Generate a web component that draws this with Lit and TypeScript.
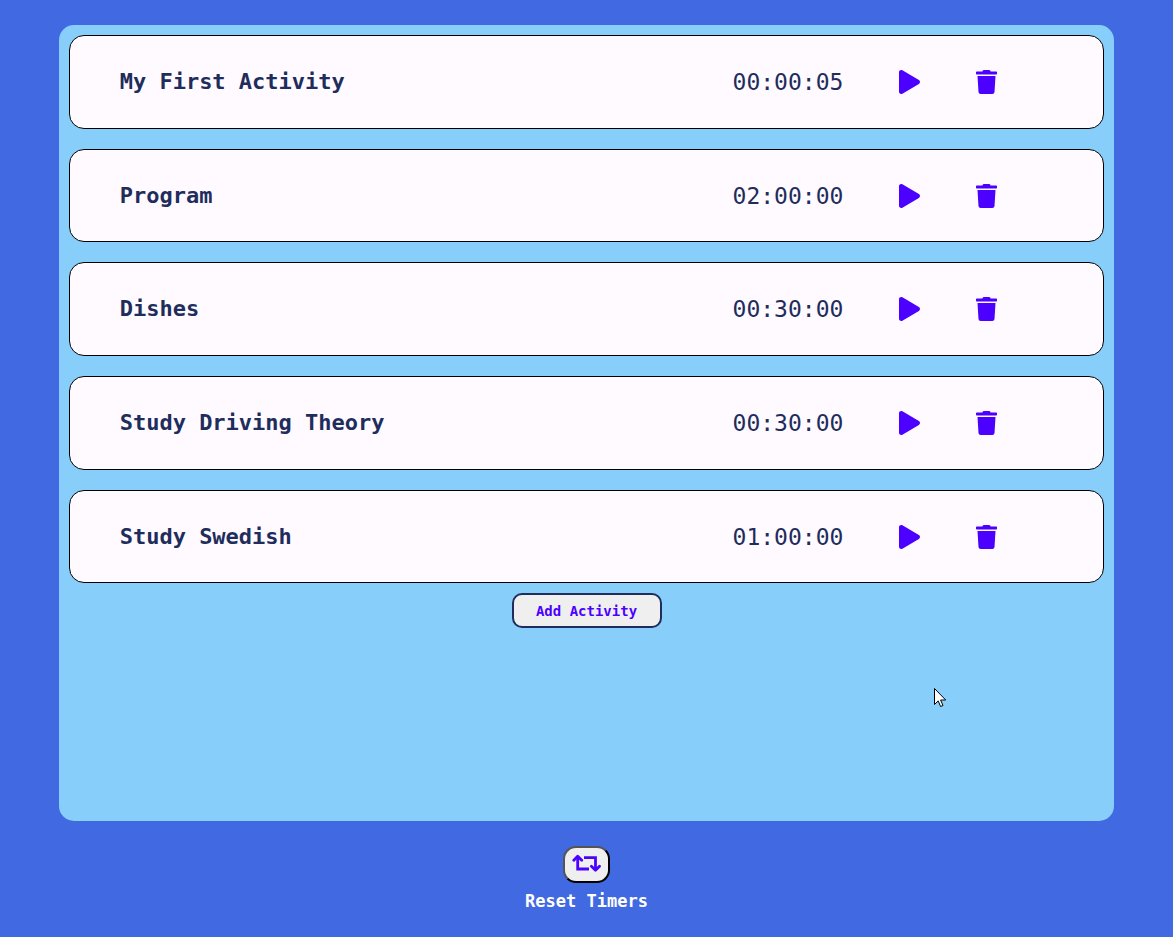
import { LitElement, html, css, svg } from "lit";
import { customElement, property, state } from "lit/decorators.js";

interface Activity {
  name: string;
  time: string;
}

const playIcon = svg`<path d="M424.4 214.7L72.4 6.6C43.8-10.3 0 6.1 0 47.9V464c0 37.5 40.7 60.1 72.4 41.3l352-208c31.4-18.5 31.5-64.1 0-82.6z"></path>`;
const trashIcon = svg`<path d="M432 32H312l-9.4-18.7A24 24 0 0 0 281.1 0H166.8a23.72 23.72 0 0 0-21.4 13.3L136 32H16A16 16 0 0 0 0 48v32a16 16 0 0 0 16 16h416a16 16 0 0 0 16-16V48a16 16 0 0 0-16-16zM53.2 467a48 48 0 0 0 47.9 45h245.8a48 48 0 0 0 47.9-45L416 128H32z"></path>`;
const retweetIcon = svg`
  <path d="M5.7 4.5V17H17"></path>
  <path d="M1.8 8.2L5.7 4.2l4 4" stroke-linecap="round" stroke-linejoin="round"></path>
  <path d="M12 5.6h11.5V18"></path>
  <path d="M19.4 14.3l4.1 4 4-4" stroke-linecap="round" stroke-linejoin="round"></path>`;

@customElement("activity-card")
class ActivityCard extends LitElement {
  @property() name = "";
  @property() time = "";

  static styles = css`
    :host {
      display: flex;
      align-items: center;
      gap: 56px;
      box-sizing: border-box;
      height: 10vh;
      padding: 0 106px 0 50px;
      border: 1px solid #000;
      border-radius: 15px;
      background: #fffaff;
      color: #1e2d5c;
    }
    .name {
      flex: 1;
      min-width: 0;
      margin: 0;
      font-size: 22px;
      line-height: 28px;
      font-weight: 700;
    }
    .time {
      font-size: 23px;
      line-height: 28px;
    }
    .action {
      display: flex;
      padding: 0;
      border: 0;
      background: none;
      color: #4c00ff;
      cursor: pointer;
    }
    .icon {
      display: block;
      width: 21px;
      height: 24px;
      fill: currentColor;
    }
  `;

  render() {
    return html`
      <h2 class="name">${this.name}</h2>
      <span class="time">${this.time}</span>
      <button class="action" aria-label="Start ${this.name}">
        <svg class="icon" viewBox="0 0 448 512" aria-hidden="true">${playIcon}</svg>
      </button>
      <button class="action" aria-label="Delete ${this.name}">
        <svg class="icon" viewBox="0 0 448 512" aria-hidden="true">${trashIcon}</svg>
      </button>
    `;
  }
}

@customElement("app-root")
class AppRoot extends LitElement {
  @state() private activities: Activity[] = [
    { name: "My First Activity", time: "00:00:05" },
    { name: "Program", time: "02:00:00" },
    { name: "Dishes", time: "00:30:00" },
    { name: "Study Driving Theory", time: "00:30:00" },
    { name: "Study Swedish", time: "01:00:00" },
  ];

  static styles = css`
    :host {
      display: flex;
      flex-direction: column;
      align-items: center;
      gap: 25px;
      box-sizing: border-box;
      min-height: 100vh;
      padding-top: 25px;
      background: #4169e1;
      font-family: Consolas, "DejaVu Sans Mono", monospace;
    }
    .panel {
      display: flex;
      flex-direction: column;
      align-items: center;
      gap: 10px;
      box-sizing: border-box;
      width: 90%;
      min-height: 85vh;
      padding: 10px;
      border-radius: 15px;
      background: #87cefa;
    }
    .list {
      display: flex;
      flex-direction: column;
      gap: 20px;
      width: 100%;
    }
    .add {
      width: 150px;
      height: 35px;
      padding: 0;
      border: 2px solid #1e2d5c;
      border-radius: 10px;
      background: #efefef;
      color: #4c00ff;
      font-family: inherit;
      font-size: 14px;
      line-height: 18px;
      font-weight: 700;
      cursor: pointer;
    }
    .footer {
      display: flex;
      flex-direction: column;
      align-items: center;
      gap: 8px;
    }
    .reset {
      display: flex;
      padding: 4px 7px 6px;
      border: 2px outset #000;
      border-radius: 13px;
      background: #efefef;
      color: #4c00ff;
      cursor: pointer;
    }
    .reset-icon {
      display: block;
      width: 29px;
      height: 23px;
      fill: none;
      stroke: currentColor;
      stroke-width: 2.8;
    }
    .label {
      color: #fff;
      font-size: 17px;
      line-height: 20px;
      font-weight: 700;
    }
    .pointer {
      position: absolute;
      left: 934px;
      top: 687px;
      width: 13px;
      height: 21px;
      pointer-events: none;
    }
  `;

  render() {
    return html`
      <main class="panel">
        <div class="list">
          ${this.activities.map(
            (a) => html`<activity-card .name=${a.name} .time=${a.time}></activity-card>`
          )}
        </div>
        <button class="add">Add Activity</button>
      </main>
      <footer class="footer">
        <button class="reset" id="reset" aria-labelledby="reset-label">
          <svg class="reset-icon" viewBox="0 0 29 23" aria-hidden="true">${retweetIcon}</svg>
        </button>
        <label class="label" id="reset-label" for="reset">Reset Timers</label>
      </footer>
      <svg class="pointer" viewBox="0 0 13 21" aria-hidden="true">
        <path d="M.5 1.5v16l3.7-3.6 2.4 5.6 2.4-1-2.4-5.5h5.1z" fill="#fff" stroke="#000"></path>
      </svg>
    `;
  }
}
